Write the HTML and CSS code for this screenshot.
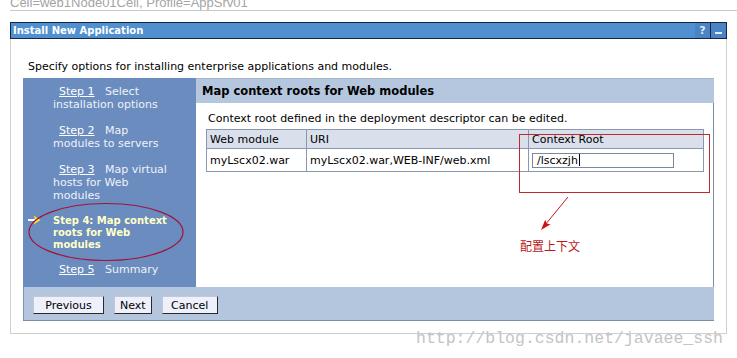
FILE: index.html
```html
<!DOCTYPE html>
<html>
<head>
    <title>Install New Application</title>
    <link rel="stylesheet" href="styles.css">
</head>
<body>
    <div class="cell-info"><span>Cell=web1Node01Cell, Profile=AppSrv01</span></div>

    <div class="portlet">
        <div class="title-bar">
            <span class="title">Install New Application</span>
            <span class="title-buttons">
                <span class="title-btn help">?</span>
                <span class="title-btn minimize"><span class="dash"></span></span>
            </span>
        </div>

        <div class="portlet-body">
            <p class="intro">Specify options for installing enterprise applications and modules.</p>

            <div class="wizard">
                <!-- Steps list -->
                <div class="steps">
                    <div class="step"><a class="step-link">Step 1</a>&nbsp;&nbsp; Select installation options</div>
                    <div class="step"><a class="step-link">Step 2</a>&nbsp;&nbsp; Map modules to servers</div>
                    <div class="step"><a class="step-link">Step 3</a>&nbsp;&nbsp; Map virtual hosts for Web modules</div>
                    <div class="step current">
                        <svg class="step-arrow" width="13" height="10" viewBox="0 0 13 10">
                            <path d="M0 5 H7" stroke="#ffffff" stroke-width="2"/>
                            <path d="M5.5 0.5 L12.5 5 L5.5 9.5 L7.5 5 Z" fill="#ffee22"/>
                        </svg>Step 4: Map context roots for Web modules
                    </div>
                    <div class="step"><a class="step-link">Step 5</a>&nbsp;&nbsp; Summary</div>

                    <svg class="mark-ellipse" width="160" height="62" viewBox="0 0 160 62">
                        <ellipse cx="80" cy="31" rx="77" ry="28.5" fill="none" stroke="#a3123c" stroke-width="1.2"/>
                    </svg>
                </div>

                <!-- Main content -->
                <div class="content">
                    <div class="content-header">Map context roots for Web modules</div>
                    <div class="content-body">
                        <p class="desc">Context root defined in the deployment descriptor can be edited.</p>
                        <table class="modules">
                            <tr>
                                <th class="col-module">Web module</th>
                                <th class="col-uri">URI</th>
                                <th class="col-root">Context Root</th>
                            </tr>
                            <tr>
                                <td>myLscx02.war</td>
                                <td>myLscx02.war,WEB-INF/web.xml</td>
                                <td><div class="text-input">/lscxzjh<span class="caret"></span></div></td>
                            </tr>
                        </table>
                    </div>

                    <div class="mark-box"></div>
                    <svg class="mark-arrow" width="42" height="44" viewBox="0 0 42 44">
                        <path d="M37 6 L14 34" stroke="#c41a1a" stroke-width="1"/>
                        <path d="M10 39 L19.5 33.2 L15.6 32.6 L14.2 28.8 Z" fill="#d01010"/>
                    </svg>
                    <div class="mark-note">配置上下文</div>
                </div>

                <!-- Buttons -->
                <div class="button-bar">
                    <button class="btn btn-prev">Previous</button>
                    <button class="btn">Next</button>
                    <button class="btn btn-cancel">Cancel</button>
                </div>
            </div>
        </div>
    </div>

    <div class="watermark">http://blog.csdn.net/javaee_ssh</div>
</body>
</html>
```

FILE: styles.css
```css
body {
    margin: 0;
    font-family: "DejaVu Sans", Verdana, sans-serif;
    font-size: 11px;
    color: #000;
    background-color: #fff;
    position: relative;
    height: 358px;
    overflow: hidden;
}
/* Top breadcrumb, cut off by the window edge */
.cell-info {
    margin-left: 10px;
    height: 10px;
    border-bottom: 1px solid #c8c8c8;
    font-family: "Liberation Sans", Arial, sans-serif;
    font-size: 13px;
    line-height: 6px;
    color: #a4a4a4;
}
/* Portlet frame */
.portlet {
    margin: 11px 10px 0 10px;
    border: 1px solid #cfcfcf;
    border-top: none;
}
.title-bar {
    display: flex;
    justify-content: space-between;
    align-items: stretch;
    height: 15px;
    margin: 0 -1px;
    border: 1px solid #15253d;
    background-color: #5090d0;
}
.title {
    padding-left: 2px;
    font-size: 10px;
    font-weight: bold;
    line-height: 15px;
    color: #fff;
}
.title-buttons {
    display: flex;
}
.title-btn {
    width: 15px;
    background-color: #4a84c4;
    color: #dfe9f6;
    font-weight: bold;
    font-size: 11px;
    line-height: 15px;
    text-align: center;
}
.title-btn.help {
    border-right: 1px solid #15253d;
}
.title-btn .dash {
    display: inline-block;
    width: 7px;
    height: 2px;
    margin-top: 9px;
    background-color: #e4ecf7;
    vertical-align: top;
}
.portlet-body {
    padding: 0 12px 12px 12px;
}
.intro {
    margin: 21px 0 5px 5px;
    line-height: 13px;
}
/* Wizard: steps + content + buttons */
.wizard {
    display: grid;
    grid-template-columns: 173px 1fr;
    border-right: 1px solid #7d8da6;
}
.steps {
    position: relative;
    padding: 7px 24px 11px 30px;
    background-color: #6b8cbe;
    color: #eef2fa;
}
.step {
    line-height: 13px;
    margin-bottom: 13px;
    text-indent: 6px;
}
.step:last-of-type {
    margin-bottom: 0;
}
.step-link {
    color: #fff;
    text-decoration: underline;
}
.step.current {
    margin-bottom: 12px;
    text-indent: -25px;
    font-size: 10px;
    font-weight: bold;
    color: #ffffc8;
    line-height: 12px;
}
.step-arrow {
    margin-right: 12px;
    vertical-align: -1px;
}
.mark-ellipse {
    position: absolute;
    left: 3px;
    top: 123px;
}
.content {
    position: relative;
    border-top: 1px solid #a4b4c8;
}
.content-header {
    height: 24px;
    padding-left: 6px;
    background-color: #b5c7df;
    font-size: 11.5px;
    font-weight: bold;
    line-height: 25px;
}
.content-body {
    padding: 9px 10px 0 10px;
}
.desc {
    margin: 0 0 4px 2px;
    line-height: 13px;
}
.modules {
    width: 498px;
    border-collapse: collapse;
    border: 1px solid #8898b0;
}
.modules th,
.modules td {
    border: 1px solid #8898b0;
    padding: 0 0 0 3px;
    text-align: left;
    font-weight: normal;
}
.modules th {
    height: 18px;
    background-color: #d9dfeb;
}
.modules td {
    height: 22px;
}
.col-module {
    width: 96px;
}
.col-uri {
    width: 218px;
}
.text-input {
    width: 136px;
    height: 13px;
    padding-left: 4px;
    border: 1px solid #7a8898;
    line-height: 13px;
    background-color: #fff;
}
.caret {
    display: inline-block;
    width: 1px;
    height: 12px;
    margin-left: 1px;
    background-color: #000;
    vertical-align: -2px;
}
/* Red annotations over the screenshot */
.mark-box {
    position: absolute;
    left: 323px;
    top: 55px;
    width: 189px;
    height: 57px;
    border: 1px solid #c0282c;
}
.mark-arrow {
    position: absolute;
    left: 335px;
    top: 112px;
}
.mark-note {
    position: absolute;
    left: 324px;
    top: 160px;
    font-family: "Noto Sans CJK SC", sans-serif;
    font-size: 12px;
    line-height: 14px;
    color: #b81818;
}
.button-bar {
    grid-column: 1 / -1;
    display: flex;
    gap: 10px;
    height: 24px;
    padding: 9px 0 0 9px;
    background-color: #b4c6de;
    border-left: 1px solid #8292aa;
    border-bottom: 1px solid #7d8da6;
}
.btn {
    height: 18px;
    padding: 0 5px;
    border: 1px solid;
    border-color: #c4c8d4 #2a2a2a #2a2a2a #c4c8d4;
    background-color: #eef0fb;
    font-family: "DejaVu Sans", Verdana, sans-serif;
    font-size: 11px;
    color: #000;
}
.btn-prev {
    width: 71px;
}
.btn-cancel {
    width: 56px;
}
.watermark {
    position: absolute;
    left: 416px;
    top: 329px;
    font-family: "Liberation Mono", monospace;
    font-size: 16.5px;
    color: #c4c4c4;
}
```
